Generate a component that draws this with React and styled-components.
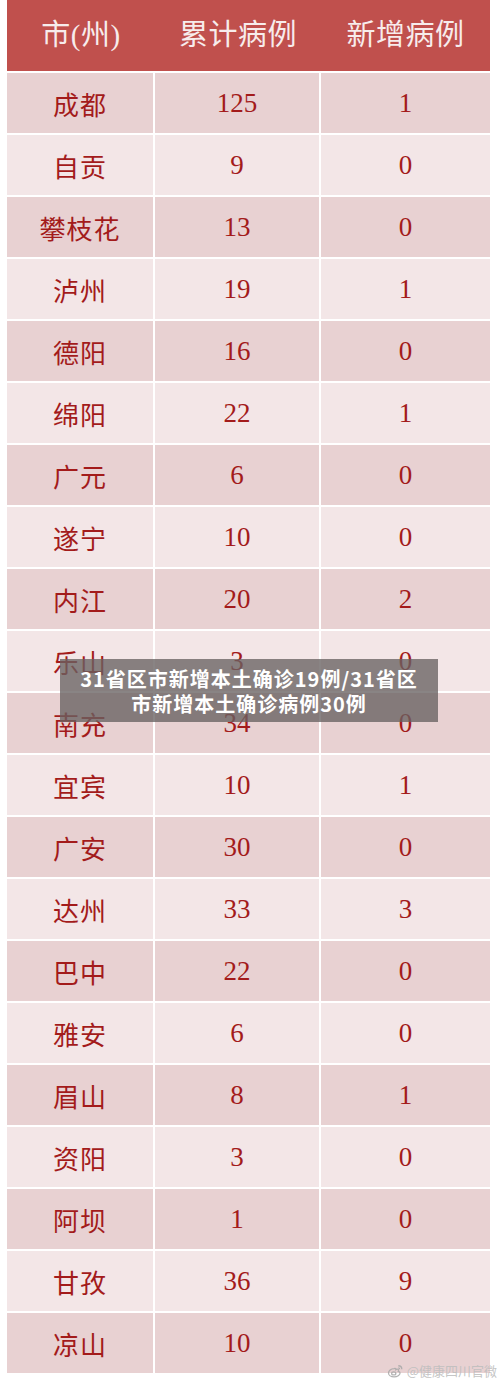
import React from 'react';
import styled, { createGlobalStyle } from 'styled-components';

const GlobalStyle = createGlobalStyle`
  html, body {
    margin: 0;
    padding: 0;
    background: #ffffff;
  }
`;

const rows = [
  ['成都', '125', '1'],
  ['自贡', '9', '0'],
  ['攀枝花', '13', '0'],
  ['泸州', '19', '1'],
  ['德阳', '16', '0'],
  ['绵阳', '22', '1'],
  ['广元', '6', '0'],
  ['遂宁', '10', '0'],
  ['内江', '20', '2'],
  ['乐山', '3', '0'],
  ['南充', '34', '0'],
  ['宜宾', '10', '1'],
  ['广安', '30', '0'],
  ['达州', '33', '3'],
  ['巴中', '22', '0'],
  ['雅安', '6', '0'],
  ['眉山', '8', '1'],
  ['资阳', '3', '0'],
  ['阿坝', '1', '0'],
  ['甘孜', '36', '9'],
  ['凉山', '10', '0'],
];

const Page = styled.div`
  position: relative;
  width: 500px;
  height: 1381px;
  overflow: hidden;
  background: #ffffff;
  padding-left: 7px;
  box-sizing: border-box;
`;

const Table = styled.div`
  display: grid;
  grid-template-columns: 146px 164px 169px;
  column-gap: 2px;
  row-gap: 2px;
  width: 483px;
`;

const HeadCell = styled.div`
  height: 71px;
  background: #c0504d;
  margin-right: ${(p) => (p.$last ? '0' : '-2px')};
  display: flex;
  align-items: center;
  justify-content: center;
  padding-bottom: 8px;
  box-sizing: border-box;
  color: #f7ecec;
  font-family: "Liberation Serif", "Noto Sans CJK SC", serif;
  font-size: 29px;
  letter-spacing: 0.5px;
`;

const Cell = styled.div`
  height: 60px;
  background: ${(p) => (p.$dark ? '#e8d1d2' : '#f3e6e7')};
  display: flex;
  align-items: center;
  justify-content: center;
  color: #a31b1b;
  font-family: "Liberation Serif", "Noto Sans CJK SC", serif;
  font-size: ${(p) => (p.$num ? '27px' : '26px')};
  letter-spacing: ${(p) => (p.$num ? '0' : '1px')};
`;

const Banner = styled.div`
  position: absolute;
  left: 60px;
  top: 659px;
  width: 378px;
  height: 63px;
  background: rgba(104, 98, 98, 0.78);
  display: flex;
  flex-direction: column;
  align-items: center;
  justify-content: center;
  color: #ffffff;
  font-family: "Noto Sans CJK SC", "Noto Sans", sans-serif;
  font-weight: 700;
  font-size: 20px;
  letter-spacing: 1px;
  line-height: 25px;
  text-align: center;
`;

const Watermark = styled.div`
  position: absolute;
  right: 3px;
  bottom: 3px;
  display: flex;
  align-items: center;
  gap: 3px;
  color: rgba(190, 190, 190, 0.9);
  font-family: "Noto Sans CJK SC", sans-serif;
  font-size: 13px;
  line-height: 14px;
`;

const WeiboIcon = () => (
  <svg width="17" height="14" viewBox="0 0 24 20" fill="none" stroke="rgba(170,170,170,0.9)" strokeWidth="1.8">
    <path d="M10 6.5c-4.5 0-8 3-8 6.5 0 3 3.5 5.5 8 5.5s8.5-2.5 8.5-5.5c0-1.8-1.6-2.4-2.6-2.6 1-1.8 0.4-3.5-2-3 -1 0.3-1.5 0.6-1.5 0.6 0.3-1.4-0.4-2.3-2.4-1.5z" />
    <ellipse cx="9.5" cy="13.5" rx="3" ry="2.2" />
    <path d="M16 2.5c2.8 0 5 2.2 5 5" />
    <path d="M16 5.5c1.2 0 2 0.8 2 2" />
  </svg>
);

export default function App() {
  return (
    <Page>
      <GlobalStyle />
      <Table>
        <HeadCell>市(州)</HeadCell>
        <HeadCell>累计病例</HeadCell>
        <HeadCell $last>新增病例</HeadCell>
        {rows.map(([city, total, added], i) => (
          <React.Fragment key={city}>
            <Cell $dark={i % 2 === 0}>{city}</Cell>
            <Cell $dark={i % 2 === 0} $num>{total}</Cell>
            <Cell $dark={i % 2 === 0} $num>{added}</Cell>
          </React.Fragment>
        ))}
      </Table>
      <Banner>
        <div>31省区市新增本土确诊19例/31省区</div>
        <div>市新增本土确诊病例30例</div>
      </Banner>
      <Watermark>
        <WeiboIcon />
        <span>@健康四川官微</span>
      </Watermark>
    </Page>
  );
}
